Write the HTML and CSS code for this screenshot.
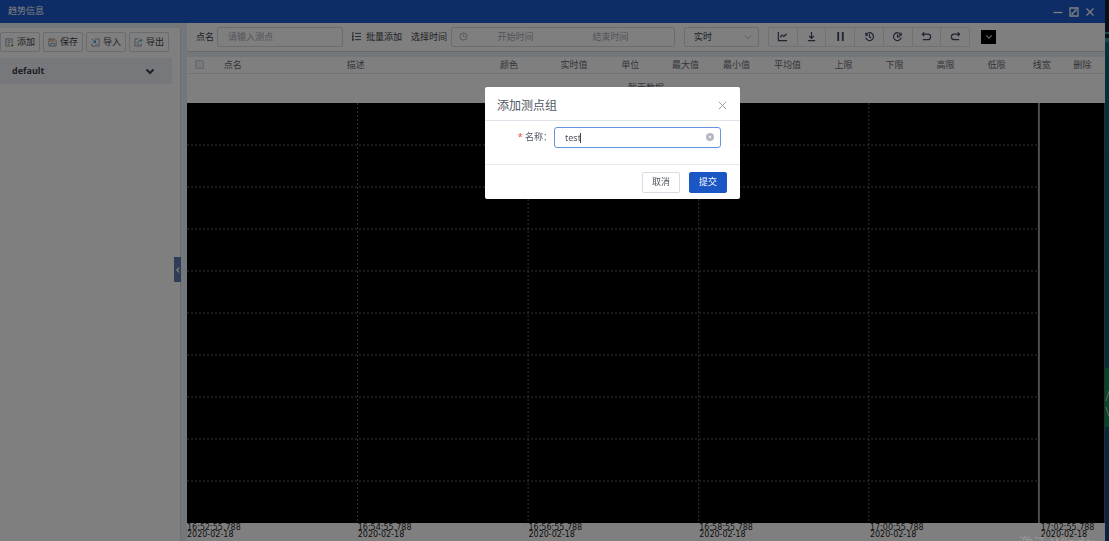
FILE: index.html
```html
<!DOCTYPE html>
<html lang="zh-CN">
<head>
<meta charset="utf-8">
<title>趋势信息</title>
<link rel="stylesheet" href="styles.css">
</head>
<body>
<div class="desktop">
  <div class="window">
    <header class="titlebar">
      <h1>趋势信息</h1>
      <div class="window-controls">
        <button type="button" aria-label="最小化"><svg viewBox="0 0 10 10"><path d="M.5 5.5h9"/></svg></button>
        <button type="button" aria-label="最大化"><svg viewBox="0 0 10 10"><path d="M1 1h8v8H1zM5.500 3h1.500v1.500M7 3 3 7M3 5.500V7h1.500"/></svg></button>
        <button type="button" aria-label="关闭"><svg viewBox="0 0 10 10"><path d="m1.5 1.5 7 7M8.5 1.5l-7 7"/></svg></button>
      </div>
    </header>
    <div class="content">
      <aside class="sidebar">
        <div class="actions">
          <button type="button"><svg viewBox="0 0 10 10"><path d="M6 9H1V1h7v5M3 3h3M3 5h3M3 7h2"/><path class="green" d="M6.5 8.2h3M8 6.7v3"/></svg>添加</button>
          <button type="button"><svg viewBox="0 0 10 10"><path d="M1 1h6l2 2v6H1zM3 9V6h4v3"/><path class="orange" d="M3 1v2.5h3V1"/></svg>保存</button>
          <button type="button"><svg viewBox="0 0 10 10"><path d="M4 1h5v8H1V6M5 7h2"/><path class="cyan" d="m1 1 4 4M5 2.5V5H2.5"/></svg>导入</button>
          <button type="button"><svg viewBox="0 0 10 10"><path d="M5 1H1v8h7V6M3 7h3M3 5h1"/><path class="cyan" d="M4.5 5C5 3 6 2.5 9 2.5M7 .8l2 1.700-2 1.700"/></svg>导出</button>
        </div>
        <button class="group" type="button"><span>default</span><svg viewBox="0 0 10 10"><path d="m1.5 3.5 3.5 3.5 3.5-3.5"/></svg></button>
        <button class="collapse" type="button" aria-label="收起"><svg viewBox="0 0 10 10"><path d="M7 1 3 5l4 4"/></svg></button>
      </aside>
      <main class="main">
        <div class="toolbar">
          <label for="point">点名</label>
          <input id="point" class="field point" type="text" placeholder="请输入测点">
          <button class="batch" type="button"><svg viewBox="0 0 10 10"><path d="M3.5 1.5H10M3.5 5H10M3.5 8.5H10M1 0v10M0 8.5h2M0 5h2"/></svg>批量添加</button>
          <label for="start">选择时间</label>
          <div class="field range">
            <svg viewBox="0 0 10 10"><circle cx="5" cy="5" r="4"/><path d="M5 2.5V5h2"/></svg>
            <input id="start" type="text" placeholder="开始时间">
            <input type="text" aria-label="结束时间" placeholder="结束时间">
          </div>
          <div class="select-wrap">
            <select class="field" aria-label="模式"><option>实时</option></select>
            <svg viewBox="0 0 10 10"><path d="m1 3 4 4 4-4"/></svg>
          </div>
          <div class="tools">
            <button type="button" aria-label="曲线"><svg viewBox="0 0 12 12"><path d="M1.5 1v9.5H11M3.5 7l2-2.500L7.5 6 10.5 3"/></svg></button>
            <button type="button" aria-label="下载"><svg viewBox="0 0 12 12"><path d="M6 1v6.500M3.5 5.500 6 8l2.500-2.500M2 10.500h8"/></svg></button>
            <button type="button" aria-label="暂停"><svg viewBox="0 0 12 12"><path class="thick" d="M3.5 1v10M8.5 1v10"/></svg></button>
            <button type="button" aria-label="历史"><svg viewBox="0 0 12 12"><path d="M2 2v2.500h2.500M2.200 4.200a4.300 4.300 0 1 1-.3 3M6 3.500V6.500l2 1"/></svg></button>
            <button type="button" aria-label="刷新"><svg viewBox="0 0 12 12"><path d="M10 2v2.500H7.500M9.800 4.200a4.300 4.300 0 1 0 .3 3M6 3.500V6.500h2.500"/></svg></button>
            <button type="button" aria-label="撤销"><svg viewBox="0 0 12 12"><path d="M3.500 1.500 1.500 3.500l2 2M1.500 3.500h6a3 3 0 0 1 0 6H2"/></svg></button>
            <button type="button" aria-label="重做"><svg viewBox="0 0 12 12"><path d="m8.500 1.500 2 2-2 2M10.500 3.500h-6a3 3 0 0 0 0 6H10"/></svg></button>
          </div>
          <button class="swatch" type="button" aria-label="背景颜色"><svg viewBox="0 0 10 10"><path d="m1.500 3 3.500 3.500L8.500 3"/></svg></button>
        </div>
        <div class="data">
          <table>
            <thead>
              <tr><th><input type="checkbox" aria-label="全选"></th><th>点名</th><th>描述</th><th>颜色</th><th>实时值</th><th>单位</th><th>最大值</th><th>最小值</th><th>平均值</th><th>上限</th><th>下限</th><th>高限</th><th>低限</th><th>线宽</th><th>删除</th></tr>
            </thead>
            <tbody><tr><td colspan="15">暂无数据</td></tr></tbody>
          </table>
          <div class="plot">
            <svg width="100%" height="100%">
              <g class="grid">
                <line x1="0" x2="92.9%" y1="10%" y2="10%"/><line x1="0" x2="92.9%" y1="20%" y2="20%"/><line x1="0" x2="92.9%" y1="30%" y2="30%"/><line x1="0" x2="92.9%" y1="40%" y2="40%"/><line x1="0" x2="92.9%" y1="50%" y2="50%"/><line x1="0" x2="92.9%" y1="60%" y2="60%"/><line x1="0" x2="92.9%" y1="70%" y2="70%"/><line x1="0" x2="92.9%" y1="80%" y2="80%"/><line x1="0" x2="92.9%" y1="90%" y2="90%"/>
                <line x1="18.6%" x2="18.6%" y1="0" y2="100%"/><line x1="37.2%" x2="37.2%" y1="0" y2="100%"/><line x1="55.8%" x2="55.8%" y1="0" y2="100%"/><line x1="74.35%" x2="74.35%" y1="0" y2="100%"/>
              </g>
              <line class="cursor" x1="92.9%" x2="92.9%" y1="0" y2="100%"/>
            </svg>
          </div>
          <div class="axis">
            <time>16:52:55.788<br>2020-02-18</time><time>16:54:55.788<br>2020-02-18</time><time>16:56:55.788<br>2020-02-18</time><time>16:58:55.788<br>2020-02-18</time><time>17:00:55.788<br>2020-02-18</time><time>17:02:55.788<br>2020-02-18</time>
          </div>
        </div>
      </main>
    </div>
  </div>
  <div class="wallpaper"><svg viewBox="0 0 4 60"><path d="M4 24 1 34M1 40l3 9"/></svg></div>
</div>
<div class="overlay">
  <form class="modal" role="dialog" aria-labelledby="modal-title">
    <div class="modal-head">
      <h2 id="modal-title">添加测点组</h2>
      <button type="button" aria-label="关闭"><svg viewBox="0 0 10 10"><path d="m1 1 8 8M9 1 1 9"/></svg></button>
    </div>
    <div class="modal-body">
      <label for="name"><span>*</span> 名称：</label>
      <div class="name-field">
        <input id="name" type="text" value="test">
        <i class="caret"></i>
        <button type="button" aria-label="清除"><svg viewBox="0 0 10 10"><circle cx="5" cy="5" r="5"/><path d="m3.500 3.500 3 3M6.500 3.500l-3 3"/></svg></button>
      </div>
    </div>
    <div class="modal-foot">
      <button type="button">取消</button>
      <button class="primary" type="submit">提交</button>
    </div>
  </form>
</div>
<div class="watermark">激活 Windows</div>
</body>
</html>
```
FILE: styles.css
```css
* { box-sizing: border-box; }
body {
  margin: 0;
  font: 9px/14px "Noto Sans", "Noto Sans CJK SC", sans-serif;
  color: #3c414c;
  overflow: hidden;
}
button, input, select { font: inherit; color: inherit; margin: 0; padding: 0; }
button { border: 0; background: none; display: flex; align-items: center; justify-content: center; }
svg { display: block; fill: none; stroke: currentColor; flex: none; }
h1, h2 { margin: 0; font-weight: 400; }

.desktop { display: flex; height: 100vh; }
.window { flex: 1; min-width: 0; display: flex; flex-direction: column; background: #e4eef6; }
.wallpaper {
  width: 4px;
  display: flex;
  align-items: flex-end;
  padding-bottom: 114px;
  color: #ccc;
  background: linear-gradient(#123 0 32px, #2a9aa0 32px 34px, #123 34px 38px, #2a9aa0 38px 42px, #07627a 42px, #075a70 68%, #009058 68% 79%, #07567a 79%, #104880 88%);
}
.wallpaper svg { width: 4px; height: 60px; }
.titlebar {
  height: 23px;
  padding: 0 10px 2px 8px;
  display: flex;
  align-items: center;
  justify-content: space-between;
  background: #1c58cc;
  color: #fff;
}
.titlebar h1 { font-size: 9px; }
.window-controls { display: flex; gap: 6px; padding-top: 3px; }
.window-controls svg { width: 10px; height: 10px; stroke-width: 1.3; }
.content { flex: 1; min-height: 0; display: flex; gap: 6px; }

.sidebar {
  position: relative;
  width: 181px;
  margin-top: 5px;
  padding-top: 4px;
  background: #fff;
  border-right: 1px solid #d5dfe8;
}
.actions { display: flex; gap: 3px; padding-right: 11px; }
.actions button {
  flex: 1;
  height: 20px;
  gap: 3px;
  border: 1px solid #d4d8e0;
  border-radius: 2px;
}
.actions svg { width: 9px; height: 9px; color: #8a94a8; }
.green { stroke: #35a835; }
.orange { stroke: #e09030; }
.cyan { stroke: #2a9ac0; }
.group {
  width: 172px;
  height: 26px;
  margin-top: 6px;
  padding: 0 17px 0 12px;
  justify-content: space-between;
  background: #eff1f8;
  font-weight: 700;
}
.group svg { width: 10px; height: 10px; stroke-width: 2; }
.collapse {
  position: absolute;
  right: -1px;
  top: 229px;
  width: 7px;
  height: 25px;
  background: #5c79aa;
  color: #fff;
}
.collapse svg { width: 6px; height: 6px; stroke-width: 2; }

.main { flex: 1; min-width: 0; display: flex; flex-direction: column; gap: 5px; }
.toolbar {
  height: 29px;
  padding: 0 9px 1px;
  display: flex;
  align-items: center;
  background: #fff;
  border-bottom: 1px solid #ccd0d4;
}
.field {
  height: 20px;
  border: 1px solid #d8dbe2;
  border-radius: 2px;
  background: #fff;
}
::placeholder { color: #a5a9b4; opacity: 1; }
.point { width: 126px; margin-left: 3px; padding: 0 10px; }
.batch { margin: 0 9px; gap: 5px; }
.batch svg { width: 9px; height: 9px; }
.range { width: 224px; margin-left: 4px; padding: 0 7px; display: flex; align-items: center; color: #a5a9b4; }
.range svg { width: 9px; height: 9px; }
.range input { width: 95px; min-width: 0; border: 0; text-align: center; background: none; }
.select-wrap { position: relative; margin: 0 9px; }
.select-wrap select { width: 75px; appearance: none; padding: 0 9px; }
.select-wrap svg { position: absolute; right: 7px; top: 6px; width: 8px; height: 8px; color: #a5a9b4; }
.tools { display: flex; width: 202px; border: 1px solid #dfe2e8; border-radius: 2px; }
.tools button { flex: 1; height: 18px; color: #404868; }
.tools button + button { border-left: 1px solid #dfe2e8; }
.tools svg { width: 11px; height: 11px; stroke-width: 1.3; }
.tools .thick { stroke-width: 2; }
.swatch { width: 15px; height: 14px; margin-left: 11px; background: #000; color: #ccc; }
.swatch svg { width: 8px; height: 8px; stroke-width: 1.5; }

.data { flex: 1; min-height: 0; display: flex; flex-direction: column; background: #fff; }
table { width: 100%; border-collapse: collapse; table-layout: fixed; }
th { height: 16px; padding: 0; text-align: left; font-weight: 400; color: #666a76; border-bottom: 1px solid #e4e7ee; }
th:nth-child(1) { width: 4%; padding-left: 8px; }
th:nth-child(2) { width: 13.4%; }
th:nth-child(3) { width: 16.7%; }
th:nth-child(4), th:nth-child(5), th:nth-child(9) { width: 6.6%; }
th:nth-child(6), th:nth-child(7), th:nth-child(8), th:nth-child(10), th:nth-child(11), th:nth-child(12) { width: 5.55%; }
th:nth-child(13) { width: 4.95%; }
th:nth-child(14) { width: 4.4%; }
th input { display: block; appearance: none; width: 9px; height: 9px; border: 1px solid #c8cee0; border-radius: 1px; background: #eef0f8; }
td { height: 30px; padding: 0; text-align: center; color: #666a76; }
.plot { flex: 1; min-height: 0; background: #000; border-right: 1px solid #555; }
.grid { stroke: #666; stroke-dasharray: 2 2; }
.cursor { stroke: #999; stroke-width: 2; }
.axis {
  height: 18px;
  padding-top: 1px;
  display: grid;
  grid-template-columns: repeat(5, 18.6%) 1fr;
  font: 8px/7px "DejaVu Sans", sans-serif;
  color: #222;
  white-space: nowrap;
}

.overlay {
  position: fixed;
  inset: 0;
  padding: 87px 0 0 116px;
  display: flex;
  align-items: flex-start;
  justify-content: center;
  background: rgba(0, 0, 0, .5);
}
.modal { width: 255px; background: #fff; border-radius: 2px; color: #505560; }
.modal-head { height: 34px; padding: 4px 13px 0 12px; display: flex; align-items: center; justify-content: space-between; border-bottom: 1px solid #e0e3ea; }
.modal-head h2 { font-size: 12px; }
.modal-head svg { width: 9px; height: 9px; color: #999; }
.modal-body { height: 43px; padding: 6px 19px 0 0; display: flex; }
.modal-body label { width: 69px; padding: 3px 2px 0 0; text-align: right; }
.modal-body label span { color: #f04040; }
.name-field { position: relative; flex: 1; }
.name-field input { width: 100%; height: 21px; padding: 0 20px 0 10px; border: 1px solid #6794e0; border-radius: 3px; outline: 0; }
.caret { position: absolute; left: 26px; top: 6px; width: 1px; height: 10px; background: #444; }
.name-field button { position: absolute; right: 7px; top: 6px; }
.name-field svg { width: 8px; height: 8px; fill: #b4b8c2; stroke: none; }
.name-field path { stroke: #fff; }
.modal-foot { height: 35px; padding-right: 13px; display: flex; align-items: center; justify-content: flex-end; gap: 9px; border-top: 1px solid #e8eaf0; }
.modal-foot button { width: 38px; height: 21px; border: 1px solid #d8dbe2; border-radius: 2px; }
.modal-foot .primary { background: #1b57c4; border-color: #1b57c4; color: #fff; }
.watermark { position: fixed; right: 12px; bottom: -10px; width: 78px; overflow: hidden; white-space: nowrap; font-size: 14px; line-height: 16px; color: #999; }
```
